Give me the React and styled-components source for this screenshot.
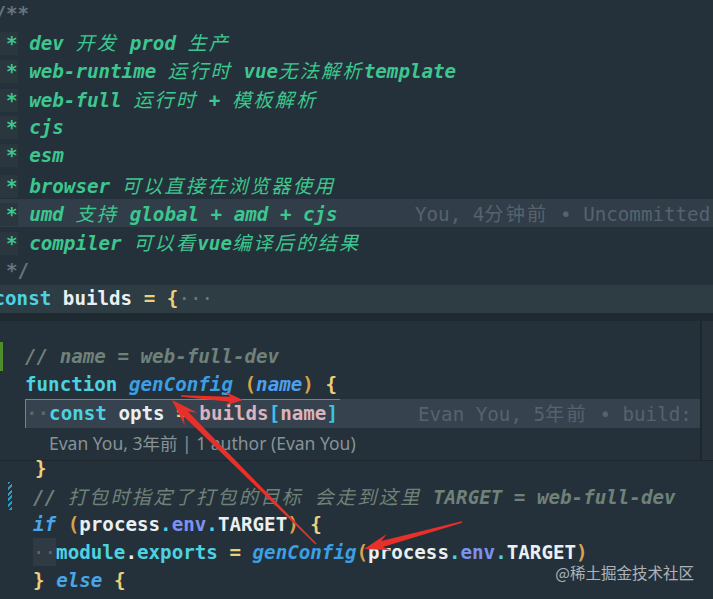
import React from 'react';
import styled, { createGlobalStyle } from 'styled-components';

const GlobalStyle = createGlobalStyle`
  html, body {
    margin: 0;
    padding: 0;
    background: #25313a;
  }
`;

const C = {
  bg: '#25313a',
  green: '#3cc78f',
  delim: '#66757f',
  kw: '#4dd2e2',
  ident: '#eaf0f2',
  punct: '#ecd07a',
  paren: '#d9a24a',
  fn: '#3c9fe3',
  param: '#4ba0ee',
  cmt: '#6f8179',
  prop: '#dcb2bd',
  bracket: '#39c3ea',
  env: '#7d92ee',
  ctl: '#4aa6e8',
  ghost: '#56636d',
  ws: '#5c676f',
};

const Screen = styled.div`
  position: relative;
  width: 713px;
  height: 599px;
  overflow: hidden;
  background: ${C.bg};
  font-family: "DejaVu Sans Mono", "Noto Sans CJK SC", monospace;
  font-size: 19.2px;
  font-weight: 600;
`;

const Pane = styled.div`
  display: flex;
  flex-direction: column;
  margin-top: ${p => p.$offset || 0}px;
`;

const Line = styled.div`
  display: flex;
  align-items: center;
  height: ${p => p.$h || 28.6}px;
  white-space: pre;
  background: ${p => p.$bg || 'transparent'};
`;

const Gutter = styled.div`
  flex: none;
  align-self: stretch;
  width: ${p => p.$w}px;
  display: flex;
`;

const Marker = styled.span`
  width: ${p => (p.$kind === 'added' ? 3 : 4)}px;
  margin-left: ${p => (p.$kind === 'added' ? 0 : 8)}px;
  background: ${p =>
    p.$kind === 'added'
      ? '#4f8c2c'
      : 'repeating-linear-gradient(135deg, #2f9bc2 0 2px, transparent 2px 4px)'};
`;

const Code = styled.span`
  flex: none;
  margin-left: ${p => p.$x || 0}px;
  min-width: ${p => p.$min || 0}px;
`;

const T = styled.span`
  color: ${p => p.$c};
  font-style: ${p => (p.$i ? 'italic' : 'normal')};
`;

const Han = styled.span`
  letter-spacing: 2.2px;
  font-weight: 400;
`;

const Lead = styled.span`
  background: #2b373f;
  color: ${C.green};
`;

const Blame = styled.span`
  color: ${C.ghost};
  font-weight: 400;
`;

const FoldDots = styled.span`
  color: #6b7881;
  font-weight: 400;
`;

const Divider = styled.div`
  height: 8px;
  background: #1f2a30;
`;

const Peek = styled.section`
  display: flex;
  height: 140px;
`;

const PeekBody = styled.div`
  box-sizing: border-box;
  flex: 0 0 700px;
  padding-top: 20.7px;
  border-bottom: 1px solid #1c252b;
`;

const PeekEdge = styled.div`
  flex: 1;
  background: #27323a;
  border-left: 2px solid #1e272d;
  border-bottom: 1px solid #1c252b;
`;

const Current = styled.div`
  position: relative;
  flex: 1;
  align-self: stretch;
  display: flex;
  align-items: center;
  background: #36424e;
  border-left: 1px solid #8d8350;

  &::before {
    content: '';
    position: absolute;
    top: 0;
    left: 0;
    width: 314px;
    height: 1px;
    background: #8d8350;
  }
`;

const Ws = styled.span`
  color: ${C.ws};
  font-weight: 400;
  background: ${p => (p.$box ? '#2f3a43' : 'transparent')};
  align-self: stretch;
  display: flex;
  align-items: center;
`;

const Lens = styled.span`
  font-family: "Noto Sans", "Noto Sans CJK SC", sans-serif;
  font-size: 17.5px;
  font-weight: 400;
  color: #889297;
`;

const Watermark = styled.div`
  position: absolute;
  right: 19px;
  bottom: 16px;
  font-family: "Noto Sans CJK SC", sans-serif;
  font-size: 15.5px;
  font-weight: 400;
  color: rgba(225, 229, 232, 0.72);
`;

const Overlay = styled.svg`
  position: absolute;
  top: 0;
  left: 0;
  pointer-events: none;
`;

const hanify = str =>
  str.split(/([\u3000-\u9fff\uff00-\uffef]+)/).map((part, i) =>
    /[\u3000-\u9fff\uff00-\uffef]/.test(part) ? <Han key={i}>{part}</Han> : part
  );

const arrowPoints = (x1, y1, x2, y2, headL, headW, neckW, tailW) => {
  const len = Math.hypot(x2 - x1, y2 - y1);
  const ux = (x2 - x1) / len;
  const uy = (y2 - y1) / len;
  const nx = -uy;
  const ny = ux;
  const p = (x, y, w) => `${(x + nx * w).toFixed(1)},${(y + ny * w).toFixed(1)}`;
  const neckX = x2 - ux * headL * 0.72;
  const neckY = y2 - uy * headL * 0.72;
  const wingX = x2 - ux * headL;
  const wingY = y2 - uy * headL;
  return [
    p(x1, y1, tailW / 2),
    p(neckX, neckY, neckW / 2),
    p(wingX, wingY, headW / 2),
    p(x2, y2, 0),
    p(wingX, wingY, -headW / 2),
    p(neckX, neckY, -neckW / 2),
    p(x1, y1, -tailW / 2),
  ].join(' ');
};

const arrows = [
  [316, 544, 172, 400, 27, 18, 6, 1.5],
  [181, 396, 243, 400, 18, 14, 5, 1.5],
  [462, 522, 364, 549, 26, 17, 6, 1.5],
];

const docLines = [
  'dev 开发 prod 生产',
  'web-runtime 运行时 vue无法解析template',
  'web-full 运行时 + 模板解析',
  'cjs',
  'esm',
  'browser 可以直接在浏览器使用',
  'umd 支持 global + amd + cjs',
  'compiler 可以看vue编译后的结果',
];

const DocLine = ({ text, active }) => (
  <Line $bg={active ? '#313d48' : undefined}>
    <Code $x={-5.5} $min={active ? 420.5 : 0}>
      <Lead> *</Lead> <T $c={C.green} $i>{hanify(text)}</T>
    </Code>
    {active && <Blame>{hanify('You, 4分钟前 • Uncommitted')}</Blame>}
  </Line>
);

export default function App() {
  return (
    <Screen>
      <GlobalStyle />
      <Pane $offset={-1.3}>
        <Line>
          <Code $x={-5.5}><T $c={C.delim}>/**</T></Code>
        </Line>
        {docLines.map((text, i) => (
          <DocLine key={i} text={text} active={i === 6} />
        ))}
        <Line>
          <Code $x={-5.5}><T $c={C.delim}> */</T></Code>
        </Line>
        <Line $bg="#2e3c44">
          <Code $x={-6.5}>
            <T $c={C.kw}>const</T> <T $c={C.ident}>builds</T> <T $c={C.punct}>=</T>{' '}
            <T $c={C.punct}>{'{'}</T>
            <FoldDots>···</FoldDots>
          </Code>
        </Line>
      </Pane>

      <Divider />

      <Peek>
        <PeekBody>
          <Line>
            <Gutter $w={25}><Marker $kind="added" /></Gutter>
            <Code><T $c={C.cmt} $i>// name = web-full-dev</T></Code>
          </Line>
          <Line>
            <Gutter $w={25} />
            <Code>
              <T $c={C.kw}>function</T> <T $c={C.fn} $i>genConfig</T>{' '}
              <T $c={C.paren}>(</T><T $c={C.param} $i>name</T><T $c={C.paren}>)</T>{' '}
              <T $c={C.punct}>{'{'}</T>
            </Code>
          </Line>
          <Line>
            <Gutter $w={25} />
            <Current>
              <Code $min={392}>
                <T $c={C.ws}>··</T>
                <T $c={C.kw}>const</T> <T $c={C.ident}>opts</T> <T $c={C.punct}>=</T>{' '}
                <T $c={C.prop}>builds</T><T $c={C.bracket}>[</T><T $c={C.prop}>name</T>
                <T $c={C.bracket}>]</T>
              </Code>
              <Blame>{hanify('Evan You, 5年前 • build:')}</Blame>
            </Current>
          </Line>
          <Line>
            <Gutter $w={49} />
            <Lens>Evan You, 3年前 | 1 author (Evan You)</Lens>
          </Line>
        </PeekBody>
        <PeekEdge />
      </Peek>

      <Pane $offset={-7}>
        <Line $h={28}>
          <Gutter $w={35} />
          <Code><T $c={C.punct}>{'}'}</T></Code>
        </Line>
        <Line $h={28}>
          <Gutter $w={33}><Marker $kind="modified" /></Gutter>
          <Code>
            <T $c={C.cmt} $i>{hanify('// 打包时指定了打包的目标 会走到这里 TARGET = web-full-dev')}</T>
          </Code>
        </Line>
        <Line $h={28}>
          <Gutter $w={33} />
          <Code>
            <T $c={C.ctl} $i>if</T> <T $c={C.paren}>(</T><T $c={C.ident}>process</T>
            <T $c={C.kw}>.</T><T $c={C.env}>env</T><T $c={C.kw}>.</T>
            <T $c={C.ident}>TARGET</T><T $c={C.paren}>)</T> <T $c={C.punct}>{'{'}</T>
          </Code>
        </Line>
        <Line $h={28}>
          <Gutter $w={33} />
          <Ws $box>··</Ws>
          <Code>
            <T $c={C.kw}>module</T><T $c={C.ident}>.</T><T $c={C.kw}>exports</T>{' '}
            <T $c={C.punct}>=</T> <T $c={C.fn} $i>genConfig</T><T $c={C.paren}>(</T>
            <T $c={C.ident}>process</T><T $c={C.kw}>.</T><T $c={C.env}>env</T>
            <T $c={C.kw}>.</T><T $c={C.ident}>TARGET</T><T $c={C.paren}>)</T>
          </Code>
        </Line>
        <Line $h={28}>
          <Gutter $w={33} />
          <Code>
            <T $c={C.punct}>{'}'}</T> <T $c={C.ctl} $i>else</T> <T $c={C.punct}>{'{'}</T>
          </Code>
        </Line>
      </Pane>

      <Watermark>@稀土掘金技术社区</Watermark>

      <Overlay width="713" height="599" viewBox="0 0 713 599">
        {arrows.map((a, i) => (
          <polygon key={i} points={arrowPoints(...a)} fill="#e8302a" />
        ))}
      </Overlay>
    </Screen>
  );
}
